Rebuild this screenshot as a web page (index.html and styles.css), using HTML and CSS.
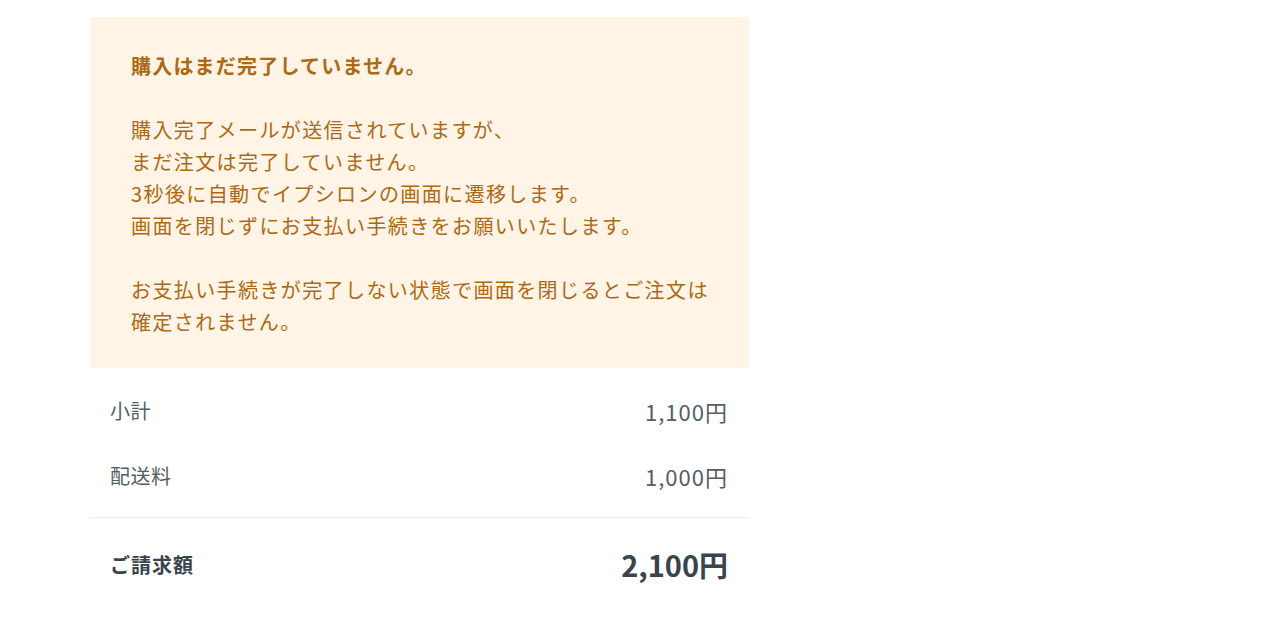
FILE: index.html
```html
<!DOCTYPE html>
<html lang="ja">
<head>
<meta charset="utf-8">
<link rel="stylesheet" href="styles.css">
</head>
<body>
<div class="wrap">
  <div class="notice">
    <p class="notice-title">購入はまだ完了していません。</p>
    <p class="notice-text">購入完了メールが送信されていますが、<br>まだ注文は完了していません。<br>3秒後に自動でイプシロンの画面に遷移します。<br>画面を閉じずにお支払い手続きをお願いいたします。</p>
    <p class="notice-text">お支払い手続きが完了しない状態で画面を閉じるとご注文は<br>確定されません。</p>
  </div>
  <div class="summary">
    <div class="row"><span class="label">小計</span><span class="value">1,100円</span></div>
    <div class="row"><span class="label">配送料</span><span class="value">1,000円</span></div>
  </div>
  <div class="total">
    <span class="total-label">ご請求額</span><span class="total-value">2,100円</span>
  </div>
</div>
</body>
</html>
```
FILE: styles.css
```css
html, body {
  margin: 0;
  padding: 0;
  background: #ffffff;
}
body {
  font-family: "Noto Sans CJK JP", "Noto Sans", sans-serif;
}
.wrap {
  width: 659px;
  margin-left: 90px;
  padding-top: 17px;
}
.notice {
  background: #fff4e6;
  padding: 33px 20px 30px 41px;
  color: #ad6a12;
  font-size: 20px;
  font-weight: 400;
  line-height: 32px;
  letter-spacing: 1.4px;
}
.notice p {
  margin: 0;
}
.notice-title {
  font-weight: 700;
  letter-spacing: 1.2px;
}
.notice-text {
  margin-top: 32px !important;
}
.summary {
  padding: 10px 21px 9px 20px;
  border-bottom: 1px solid #eeeeee;
}
.row {
  height: 65px;
  display: flex;
  align-items: center;
  justify-content: space-between;
  font-size: 20px;
  color: #555d66;
}
.label {
  letter-spacing: 0.5px;
}
.value {
  font-size: 22px;
  letter-spacing: 1px;
}
.total {
  height: 92px;
  display: flex;
  align-items: center;
  justify-content: space-between;
  padding: 0 21px 0 20px;
  color: #38444e;
}
.total-label {
  font-size: 20px;
  font-weight: 700;
  letter-spacing: 1px;
}
.total-value {
  font-size: 29px;
  font-weight: 700;
}
```
